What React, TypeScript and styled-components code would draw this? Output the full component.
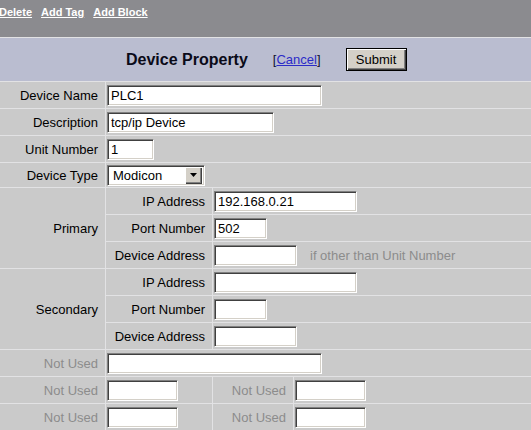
import React from 'react';
import styled, { createGlobalStyle } from 'styled-components';

const GlobalStyle = createGlobalStyle`
  html, body {
    margin: 0;
    padding: 0;
    background: #e4e4e4;
  }
  body {
    font-family: "Liberation Sans", Arial, sans-serif;
    overflow: hidden;
  }
`;

const Page = styled.div`
  width: 531px;
  height: 430px;
  overflow: hidden;
  display: flex;
  flex-direction: column;
  gap: 1px;
  background: #e2e2e4;
`;

const TopBar = styled.div`
  height: 37px;
  flex: none;
  box-sizing: border-box;
  padding-top: 6px;
  margin-left: -1px;
  display: flex;
  align-items: flex-start;
  gap: 9px;
  background: #8b8b8f;
`;

const BarLink = styled.a`
  font-size: 11px;
  font-weight: bold;
  color: #ffffff;
  text-decoration: underline;
  cursor: pointer;
`;

const Header = styled.div`
  height: 43px;
  flex: none;
  display: flex;
  align-items: center;
  background: #babdd0;
`;

const Title = styled.div`
  margin-left: 126px;
  font-size: 16px;
  font-weight: bold;
  color: #0a0a18;
`;

const CancelBox = styled.div`
  margin-left: 25px;
  font-size: 13px;
  color: #101030;
  a {
    color: #2b2bc8;
    text-decoration: underline;
    cursor: pointer;
  }
`;

const Button = styled.button`
  margin-left: 25px;
  width: 61px;
  height: 23px;
  padding: 0;
  font-family: "Liberation Sans", Arial, sans-serif;
  font-size: 13px;
  color: #000;
  background: #d4d0c8;
  border: 1px solid #000;
  box-shadow: inset 1px 1px #ffffff, inset -1px -1px #404040,
    inset -2px -2px #808080;
`;

const FormGrid = styled.div`
  display: grid;
  grid-template-columns: 105px 106px 80px 1fr;
  grid-template-rows: 26px 26px 26px 24px repeat(9, 26px);
  gap: 1px;
`;

const Label = styled.div<{ $muted?: boolean; $rows?: number }>`
  grid-row: span ${p => p.$rows || 1};
  display: flex;
  align-items: center;
  justify-content: flex-end;
  padding-right: 7px;
  font-size: 13px;
  color: ${p => (p.$muted ? '#8c8c8c' : '#000')};
  background: #cacaca;
  white-space: nowrap;
`;

const Value = styled.div<{ $span?: number }>`
  grid-column: span ${p => p.$span || 1};
  display: flex;
  align-items: center;
  padding-left: 1px;
  background: #cacaca;
`;

const inset = `
  box-sizing: border-box;
  border: 1px solid;
  border-color: #808080 #ffffff #ffffff #808080;
  box-shadow: inset 1px 1px #404040, inset -1px -1px #d4d0c8;
  background: #ffffff;
`;

const Input = styled.input<{ $w: number }>`
  ${inset}
  width: ${p => p.$w}px;
  height: 21px;
  margin: 0;
  padding: 0 3px;
  font-family: "Liberation Sans", Arial, sans-serif;
  font-size: 13px;
  color: #000;
  outline: none;
`;

const Hint = styled.span`
  margin-left: 13px;
  font-size: 13px;
  color: #8c8c8c;
`;

const SelectBox = styled.div`
  ${inset}
  width: 98px;
  height: 21px;
  padding: 2px;
  display: flex;
  align-items: center;
  font-size: 13px;
  color: #000;
`;

const SelectText = styled.span`
  flex: 1;
  padding-left: 3px;
`;

const ArrowButton = styled.span`
  box-sizing: border-box;
  width: 17px;
  height: 17px;
  display: flex;
  align-items: center;
  justify-content: center;
  background: #d4d0c8;
  box-shadow: inset 1px 1px #ffffff, inset -1px -1px #404040,
    inset -2px -2px #808080;
`;

const App: React.FC = () => {
  return (
    <>
      <GlobalStyle />
      <Page>
        <TopBar>
          <BarLink>Delete</BarLink>
          <BarLink>Add Tag</BarLink>
          <BarLink>Add Block</BarLink>
        </TopBar>
        <Header>
          <Title>Device Property</Title>
          <CancelBox>
            [<a>Cancel</a>]
          </CancelBox>
          <Button>Submit</Button>
        </Header>
        <FormGrid>
          <Label>Device Name</Label>
          <Value $span={3}>
            <Input $w={215} defaultValue='PLC1' />
          </Value>
          <Label>Description</Label>
          <Value $span={3}>
            <Input $w={167} defaultValue='tcp/ip Device' />
          </Value>
          <Label>Unit Number</Label>
          <Value $span={3}>
            <Input $w={47} defaultValue='1' />
          </Value>
          <Label>Device Type</Label>
          <Value $span={3}>
            <SelectBox>
              <SelectText>Modicon</SelectText>
              <ArrowButton>
                <svg width='7' height='4' viewBox='0 0 7 4'>
                  <polygon points='0,0 7,0 3.5,4' fill='#000' />
                </svg>
              </ArrowButton>
            </SelectBox>
          </Value>

          <Label $rows={3}>Primary</Label>
          <Label>IP Address</Label>
          <Value $span={2}>
            <Input $w={143} defaultValue='192.168.0.21' />
          </Value>
          <Label>Port Number</Label>
          <Value $span={2}>
            <Input $w={53} defaultValue='502' />
          </Value>
          <Label>Device Address</Label>
          <Value $span={2}>
            <Input $w={83} defaultValue='' />
            <Hint>if other than Unit Number</Hint>
          </Value>

          <Label $rows={3}>Secondary</Label>
          <Label>IP Address</Label>
          <Value $span={2}>
            <Input $w={143} defaultValue='' />
          </Value>
          <Label>Port Number</Label>
          <Value $span={2}>
            <Input $w={53} defaultValue='' />
          </Value>
          <Label>Device Address</Label>
          <Value $span={2}>
            <Input $w={83} defaultValue='' />
          </Value>

          <Label $muted>Not Used</Label>
          <Value $span={3}>
            <Input $w={215} defaultValue='' />
          </Value>
          <Label $muted>Not Used</Label>
          <Value>
            <Input $w={71} defaultValue='' />
          </Value>
          <Label $muted>Not Used</Label>
          <Value>
            <Input $w={71} defaultValue='' />
          </Value>
          <Label $muted>Not Used</Label>
          <Value>
            <Input $w={71} defaultValue='' />
          </Value>
          <Label $muted>Not Used</Label>
          <Value>
            <Input $w={71} defaultValue='' />
          </Value>
        </FormGrid>
      </Page>
    </>
  );
};

export default App;
